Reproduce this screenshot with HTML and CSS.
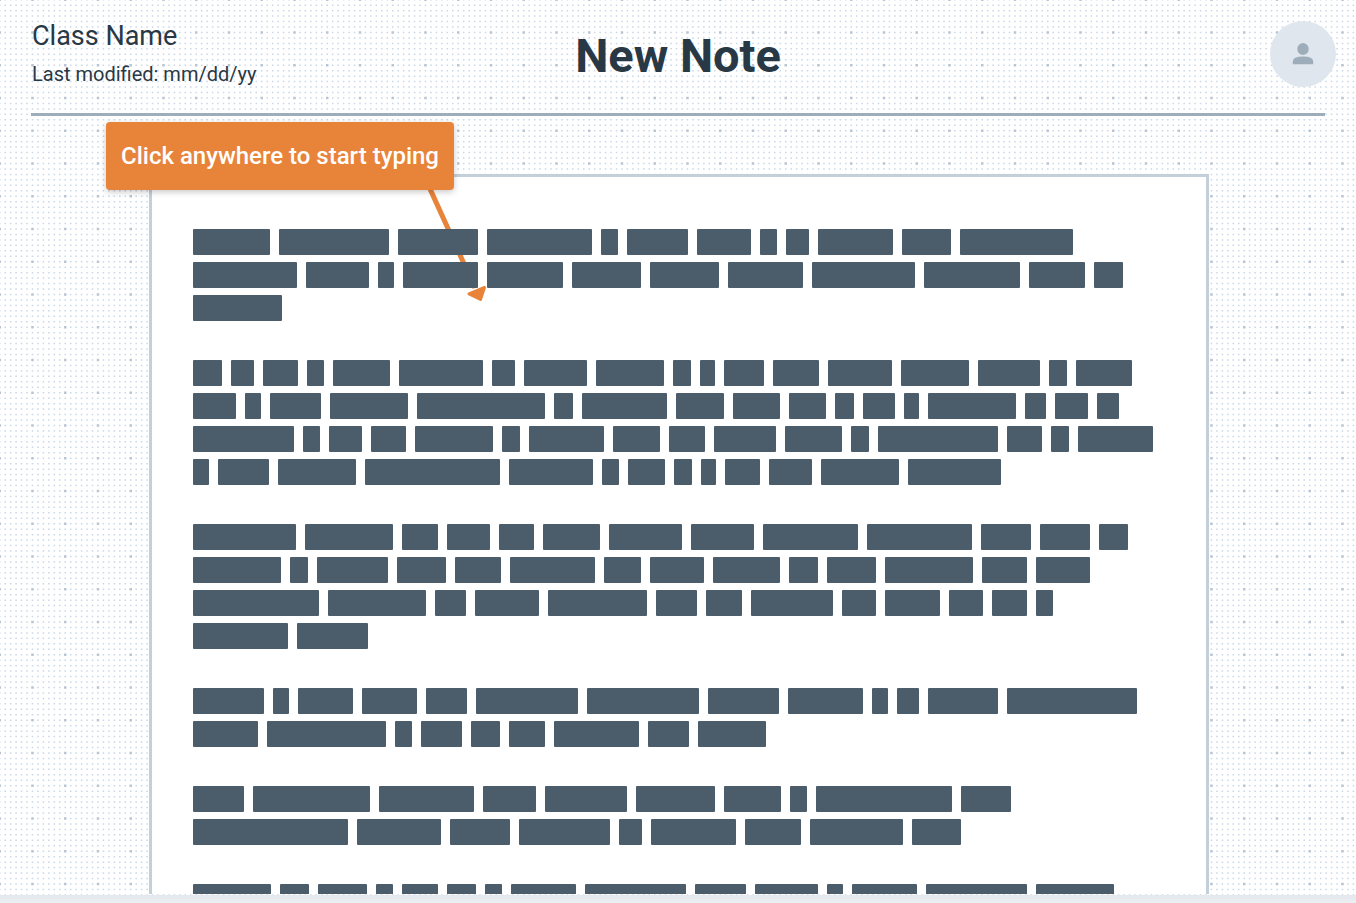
FILE: index.html
```
<!DOCTYPE html>
<html lang="en">
<head>
<meta charset="utf-8">
<title>New Note</title>
<link rel="stylesheet" href="styles.css">
</head>
<body>
<div class="board">
  <header class="header">
    <div class="meta">
      <p class="class-name">Class Name</p>
      <p class="modified">Last modified: mm/dd/yy</p>
    </div>
    <h1 class="title">New Note</h1>
    <button class="avatar" type="button" aria-label="Account">
      <svg class="avatar-icon" viewBox="0 0 22 24" aria-hidden="true">
        <rect x="5.4" y="1" width="11.2" height="12" rx="5.6"/>
        <path d="M.8 22.2V19.6Q.8 14.6 11 14.6T21.2 19.6V22.2Z"/>
      </svg>
    </button>
  </header>
  <hr class="rule">
  <main class="workspace">
    <article class="sheet">
      <svg class="arrow" viewBox="0 0 70 130" aria-hidden="true">
        <path class="arrow-line" d="M2 3L51 111"/>
        <path class="arrow-head" d="M45 117L60.500 110.500L56.500 122.500Z"/>
      </svg>
      <div class="text" id="text"></div>
    </article>
    <div class="callout" role="note">Click anywhere to start typing</div>
  </main>
</div>
<footer class="edge"></footer>
<script src="note.js"></script>
</body>
</html>
```
FILE: styles.css
```
* {
  box-sizing: border-box;
}

body {
  margin: 0;
  height: 100vh;
  display: flex;
  flex-direction: column;
  overflow: hidden;
  font-family: Roboto, "Liberation Sans", sans-serif;
  color: #293845;
  background: #fff;
}

.board {
  flex: 1;
  min-height: 0;
  display: flex;
  flex-direction: column;
  padding-bottom: 1px;
  background-color: #fff;
  background-position: -3px -3px;
  background-image: url("data:image/svg+xml,%3Csvg xmlns='http://www.w3.org/2000/svg' width='131' height='131' viewBox='0 0 24 24'%3E%3Cpath stroke='%23c9d7e6' stroke-width='.28' stroke-dasharray='.28 .72' d='M.36 .5H24M.36 1.5H24M.36 2.5H24M.36 3.5H24M.36 4.5H24M.36 5.5H24M.36 6.5H24M.36 7.5H24M.36 8.5H24M.36 9.5H24M.36 10.5H24M.36 11.5H24M.36 12.5H24M.36 13.5H24M.36 14.5H24M.36 15.5H24M.36 16.5H24M.36 17.5H24M.36 18.5H24M.36 19.5H24M.36 20.5H24M.36 21.5H24M.36 22.5H24M.36 23.5H24'/%3E%3Cpath stroke='%23b9c5d3' stroke-width='.46' stroke-dasharray='.46 5.54' d='M.27 .5H24M.27 6.5H24M.27 12.5H24M.27 18.5H24'/%3E%3C/svg%3E");
}

.header {
  display: grid;
  grid-template-columns: 1fr auto 1fr;
  align-items: center;
  padding: 18px 20px 23px;
  column-gap: 16px;
}

.meta {
  display: grid;
  gap: 6px;
  padding: 0 0 2px 12px;
}

.class-name,
.modified,
.title {
  margin: 0;
}

.class-name {
  font-size: 27px;
  line-height: 36px;
}

.modified {
  font-size: 20px;
  line-height: 28px;
}

.title {
  padding-top: 4px;
  font-size: 47px;
  line-height: 56px;
  font-weight: 700;
}

.avatar {
  justify-self: end;
  display: grid;
  place-items: center;
  width: 66px;
  height: 66px;
  padding: 0;
  border: 0;
  border-radius: 50%;
  background: #dfe6ee;
  cursor: pointer;
}

.avatar-icon {
  width: 22px;
  height: 24px;
  fill: #9eadba;
}

.rule {
  width: auto;
  height: 3px;
  margin: 0 31px;
  border: 0;
  background: #9eadba;
}

.workspace {
  position: relative;
  flex: 1;
  min-height: 0;
  display: flex;
  padding: 58px 147px 0 149px;
}

.sheet {
  position: relative;
  flex: 1;
  overflow: hidden;
  padding: 52px 41px 0;
  border: 3px solid #c3cfd9;
  border-bottom: 0;
  background: #fff;
}

.text {
  position: relative;
  display: grid;
  gap: 39px;
}

.paragraph {
  display: grid;
  gap: 7px;
}

.line {
  display: flex;
  gap: 9px;
}

.word {
  flex: none;
  height: 26px;
  border-radius: 1px;
  background: #4b5c6b;
}

.arrow {
  position: absolute;
  top: 0;
  left: 272px;
  width: 70px;
  height: 130px;
}

.arrow-line {
  fill: none;
  stroke: #e8833a;
  stroke-width: 5;
}

.arrow-head {
  fill: #e8833a;
  stroke: #e8833a;
  stroke-width: 3;
  stroke-linejoin: round;
}

.callout {
  position: absolute;
  top: 6px;
  left: 106px;
  padding: 16px 15px;
  border-radius: 4px;
  background: #e8833a;
  box-shadow: 0 2px 6px rgba(0, 0, 0, 0.22);
  color: #fff;
  font-size: 24px;
  line-height: 36px;
  font-weight: 500;
  white-space: nowrap;
}

.edge {
  flex: none;
  height: 8px;
  background: linear-gradient(#e3e8ec, #eceff2);
}
```
FILE: note.js
```
// Each line lists where its words begin, then where the line ends.
const GAP = 9;
const paragraphs = [
  [
    [193, 279, 398, 487, 601, 627, 697, 760, 786, 818, 902, 960, 1073],
    [193, 306, 378, 403, 487, 572, 650, 728, 812, 924, 1029, 1094, 1123],
    [193, 282]
  ],
  [
    [193, 231, 263, 307, 333, 399, 492, 524, 596, 673, 700, 724, 773, 828, 901, 978, 1049, 1076, 1132],
    [193, 245, 270, 330, 417, 554, 582, 676, 733, 789, 835, 863, 904, 928, 1025, 1055, 1097, 1119],
    [193, 303, 329, 371, 415, 502, 529, 613, 669, 714, 785, 851, 878, 1007, 1051, 1078, 1153],
    [193, 218, 278, 365, 509, 602, 628, 674, 701, 725, 769, 821, 908, 1001]
  ],
  [
    [193, 305, 402, 447, 499, 543, 609, 691, 763, 867, 981, 1040, 1099, 1128],
    [193, 290, 317, 397, 455, 510, 604, 650, 713, 789, 827, 885, 982, 1036, 1090],
    [193, 328, 435, 475, 548, 656, 706, 751, 842, 885, 949, 992, 1036, 1053],
    [193, 297, 368]
  ],
  [
    [193, 273, 298, 362, 426, 476, 587, 708, 788, 872, 897, 928, 1007, 1137],
    [193, 267, 395, 421, 471, 509, 554, 648, 698, 766]
  ],
  [
    [193, 253, 379, 483, 545, 636, 724, 790, 816, 961, 1011],
    [193, 357, 450, 519, 619, 651, 745, 810, 912, 961]
  ],
  [
    [193, 280, 318, 376, 402, 447, 485, 511, 585, 695, 755, 827, 852, 926, 1036, 1114]
  ]
];

const text = document.getElementById("text");
for (const lines of paragraphs) {
  const paragraph = document.createElement("div");
  paragraph.className = "paragraph";
  for (const stops of lines) {
    const line = document.createElement("div");
    line.className = "line";
    for (let i = 0; i < stops.length - 1; i++) {
      const isLast = i === stops.length - 2;
      const word = document.createElement("span");
      word.className = "word";
      word.style.width = stops[i + 1] - stops[i] - (isLast ? 0 : GAP) + "px";
      line.append(word);
    }
    paragraph.append(line);
  }
  text.append(paragraph);
}
```
